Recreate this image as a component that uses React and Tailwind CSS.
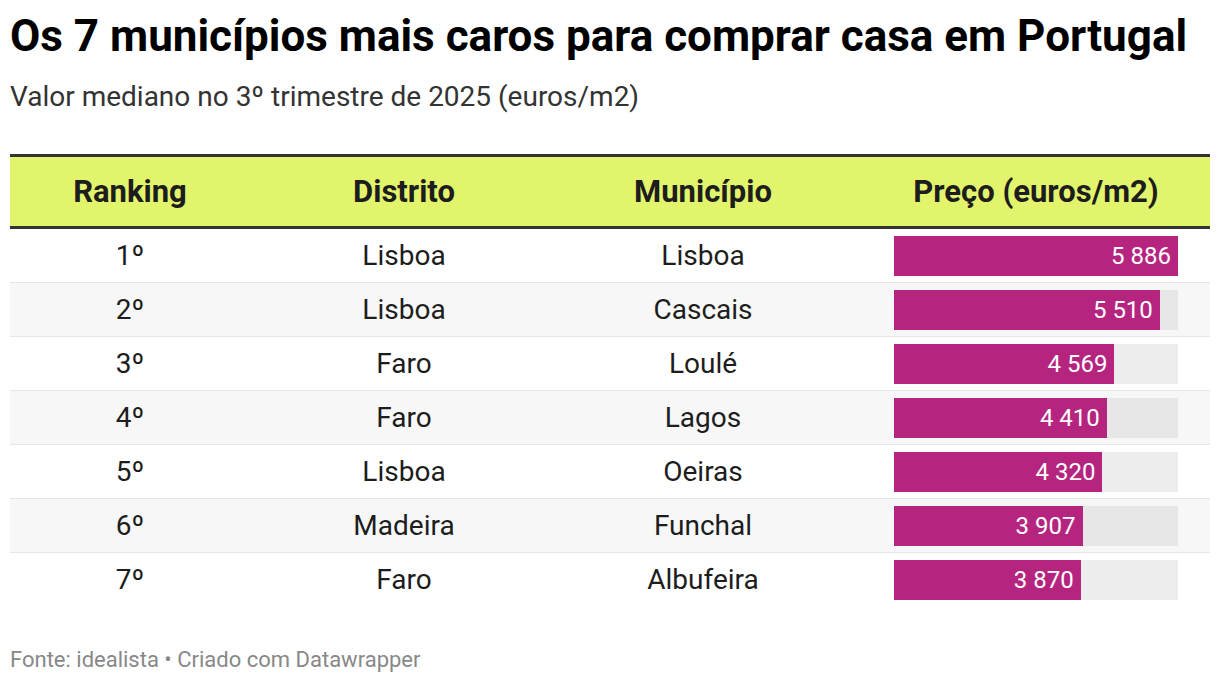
import React from "react";

const rows = [
  ["1º", "Lisboa", "Lisboa", 5886],
  ["2º", "Lisboa", "Cascais", 5510],
  ["3º", "Faro", "Loulé", 4569],
  ["4º", "Faro", "Lagos", 4410],
  ["5º", "Lisboa", "Oeiras", 4320],
  ["6º", "Madeira", "Funchal", 3907],
  ["7º", "Faro", "Albufeira", 3870],
];
const max = 5886;
const fmt = (n) => {
  const s = String(n);
  return s.slice(0, s.length - 3) + " " + s.slice(-3);
};

export default function App() {
  return (
    <div
      className="w-[1220px] h-[682px] bg-white px-[10px] text-[#1d1d1d] overflow-hidden"
      style={{ fontFamily: "Roboto, 'Liberation Sans', sans-serif" }}
    >
      <h1 className="pt-[8px] text-[44px] leading-[56px] font-bold text-black whitespace-nowrap">
        Os 7 municípios mais caros para comprar casa em Portugal
      </h1>
      <p className="mt-[17px] text-[28px] leading-[32px] text-[#333] whitespace-nowrap">
        Valor mediano no 3º trimestre de 2025 (euros/m2)
      </p>
      <div className="mt-[41px] border-t-[3px] border-[#333]">
        <div className="grid grid-cols-[240px_308px_290px_362px] h-[72px] pt-[2px] bg-[#e2f46c] border-b-[3px] border-[#333] items-center text-[31px] font-bold text-[#1d1d1d]">
          <div className="text-center">Ranking</div>
          <div className="text-center">Distrito</div>
          <div className="text-center">Município</div>
          <div className="pl-[46px] pr-[32px] text-center whitespace-nowrap">Preço (euros/m2)</div>
        </div>
        {rows.map(([r, d, m, v], i) => (
          <div
            key={r}
            className={
              "grid grid-cols-[240px_308px_290px_362px] h-[54px] items-center text-[28px] " +
              (i % 2 === 1 ? "bg-[#f7f7f7] " : "bg-white ") +
              (i < rows.length - 1 ? "border-b border-[#e6e6e6]" : "")
            }
          >
            <div className="text-center">{r}</div>
            <div className="text-center">{d}</div>
            <div className="text-center">{m}</div>
            <div className="pl-[46px] pr-[32px]">
              <div className={"h-[40px] w-full " + (i % 2 === 1 ? "bg-[#e6e6e6]" : "bg-[#ededed]")}>
                <div
                  className="h-full bg-[#b52580] text-white text-[24px] flex items-center justify-end pr-[7px] whitespace-nowrap"
                  style={{ width: `${(v / max) * 100}%` }}
                >
                  {fmt(v)}
                </div>
              </div>
            </div>
          </div>
        ))}
      </div>
      <p className="mt-[40px] text-[22px] text-[#888] leading-[26px] whitespace-nowrap">
        Fonte: idealista • Criado com Datawrapper
      </p>
    </div>
  );
}
